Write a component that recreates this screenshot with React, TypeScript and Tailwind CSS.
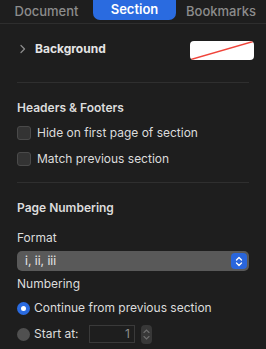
import React from 'react';

const font = { fontFamily: 'Inter, "Noto Sans", sans-serif' };

const Checkbox: React.FC<{ label: string; className?: string }> = ({ label, className }) => (
  <div className={`flex h-[20px] items-center ${className ?? ''}`}>
    <div className="h-[14px] w-[14px] rounded-[3px] border border-[#4a4a4a] bg-[#333333]" />
    <span className="ml-[6px] text-[12px] text-[#dcdcdc]">{label}</span>
  </div>
);

const Separator = () => <div className="mx-[17px] h-px bg-[#2f2f2f]" />;

const App: React.FC = () => {
  return (
    <div className="h-[349px] w-[266px] overflow-hidden bg-[#1e1e1e] text-[#dcdcdc]" style={font}>
      {/* Tabs */}
      <div className="flex h-[24px] border-b border-[#2e2e2e] text-[13px] font-medium">
        <div className="flex w-[93px] items-start justify-center pt-[2px] text-[#8c8c8c]">Document</div>
        <div className="flex h-[20px] w-[83px] items-center justify-center rounded-b-[7px] bg-[#2a6be0] font-semibold text-white">
          Section
        </div>
        <div className="flex w-[90px] items-start justify-center pt-[2px] text-[#8c8c8c]">Bookmarks</div>
      </div>

      {/* Background */}
      <div className="mt-[16px] flex h-[20px] items-center pl-[19px] pr-[12px]">
        <svg width="8" height="10" viewBox="0 0 8 10" className="mr-[8px] mb-[2px]">
          <path d="M2 1.5 L5.5 5 L2 8.5" fill="none" stroke="#8a8a8a" strokeWidth="1.3" strokeLinecap="round" strokeLinejoin="round" />
        </svg>
        <span className="mb-[2px] text-[12px] font-bold text-[#e4e4e4]">Background</span>
        <div className="ml-auto h-[19px] w-[64px] overflow-hidden rounded-[4px] bg-white">
          <svg width="64" height="19" viewBox="0 0 64 19">
            <line x1="1" y1="18.5" x2="63" y2="0.5" stroke="#f0443a" strokeWidth="1.4" />
          </svg>
        </div>
      </div>
      <div className="mt-[22px]">
        <Separator />
      </div>

      {/* Headers & Footers */}
      <div className="px-[17px]">
        <div className="mt-[17px] h-[16px] text-[12px] font-semibold leading-[16px]">Headers &amp; Footers</div>
        <Checkbox label="Hide on first page of section" className="mt-[7px]" />
        <Checkbox label="Match previous section" className="mt-[6px]" />
      </div>
      <div className="mt-[13px]">
        <Separator />
      </div>

      {/* Page Numbering */}
      <div className="px-[17px]">
        <div className="mt-[17px] h-[16px] text-[12px] font-semibold leading-[16px]">Page Numbering</div>
        <div className="mt-[14px] h-[16px] text-[12px] leading-[16px]">Format</div>
        <div className="mt-[5px] flex h-[20px] items-center rounded-[5px] bg-[#595959] pl-[8px] pr-[2px]">
          <span className="text-[12px] text-[#e8e8e8]">i, ii, iii</span>
          <div className="ml-auto flex h-[16px] w-[16px] items-center justify-center rounded-[4px] bg-[#2a66dc]">
            <svg width="8" height="11" viewBox="0 0 8 11">
              <path d="M1.5 4 L4 1.5 L6.5 4 M1.5 7 L4 9.5 L6.5 7" fill="none" stroke="white" strokeWidth="1.3" strokeLinecap="round" strokeLinejoin="round" />
            </svg>
          </div>
        </div>
        <div className="mt-[5px] h-[16px] text-[12px] leading-[16px]">Numbering</div>

        <div className="mt-[6px] flex h-[20px] items-center">
          <div className="flex h-[13px] w-[13px] items-center justify-center rounded-full bg-[#2a6be0]">
            <div className="h-[5px] w-[5px] rounded-full bg-white" />
          </div>
          <span className="ml-[4px] text-[12px]">Continue from previous section</span>
        </div>

        <div className="mt-[6px] flex h-[20px] items-center">
          <div className="h-[13px] w-[13px] rounded-full bg-[#505050]" />
          <span className="ml-[4px] w-[55px] text-[12px]">Start at:</span>
          <div className="flex h-[18px] w-[46px] items-center justify-end border border-[#3a3a3a] bg-[#1e1e1e] pr-[4px] text-[12px] text-[#8e8e8e]">
            1
          </div>
          <div className="ml-[6px] flex h-[19px] w-[11px] flex-col items-center justify-center gap-[3px] rounded-[4px] bg-[#383838]">
            <svg width="7" height="4" viewBox="0 0 7 4">
              <path d="M1 3.5 L3.5 1 L6 3.5" fill="none" stroke="#6e6e6e" strokeWidth="1.1" strokeLinecap="round" />
            </svg>
            <svg width="7" height="4" viewBox="0 0 7 4">
              <path d="M1 0.5 L3.5 3 L6 0.5" fill="none" stroke="#6e6e6e" strokeWidth="1.1" strokeLinecap="round" />
            </svg>
          </div>
        </div>
      </div>
    </div>
  );
};

export default App;
